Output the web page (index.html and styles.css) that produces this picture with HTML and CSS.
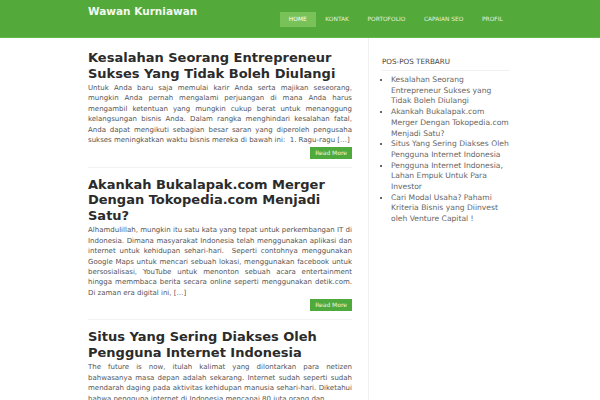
FILE: index.html
```html
<!DOCTYPE html>
<html>
<head>
<meta charset="utf-8">
<link rel="stylesheet" href="styles.css">
</head>
<body>
<header class="site-header">
  <div class="wrap header-inner">
    <div class="site-title">Wawan Kurniawan</div>
    <nav class="nav">
      <a class="nav-item active">HOME</a>
      <a class="nav-item">KONTAK</a>
      <a class="nav-item">PORTOFOLIO</a>
      <a class="nav-item">CAPAIAN SEO</a>
      <a class="nav-item">PROFIL</a>
    </nav>
  </div>
</header>
<div class="wrap main">
  <main class="content">
    <article class="post first">
      <h2 class="post-title">Kesalahan Seorang Entrepreneur Sukses Yang Tidak Boleh Diulangi</h2>
      <p class="excerpt">Untuk Anda baru saja memulai karir Anda serta majikan seseorang, mungkin Anda pernah mengalami perjuangan di mana Anda harus mengambil ketentuan yang mungkin cukup berat untuk menanggung kelangsungan bisnis Anda. Dalam rangka menghindari kesalahan fatal, Anda dapat mengikuti sebagian besar saran yang diperoleh pengusaha sukses meningkatkan waktu bisnis mereka di bawah ini:&nbsp; 1. Ragu-ragu […]</p>
      <div class="more-row"><a class="more">Read More</a></div>
    </article>
    <article class="post">
      <h2 class="post-title">Akankah Bukalapak.com Merger Dengan Tokopedia.com Menjadi Satu?</h2>
      <p class="excerpt">Alhamdulillah, mungkin itu satu kata yang tepat untuk perkembangan IT di Indonesia. Dimana masyarakat Indonesia telah menggunakan aplikasi dan internet untuk kehidupan sehari-hari. &nbsp;Seperti contohnya menggunakan Google Maps untuk mencari sebuah lokasi, menggunakan facebook untuk bersosialisasi, YouTube untuk menonton sebuah acara entertainment hingga memmbaca berita secara online seperti menggunakan detik.com. Di zaman era digital ini, […]</p>
      <div class="more-row"><a class="more">Read More</a></div>
    </article>
    <article class="post">
      <h2 class="post-title">Situs Yang Sering Diakses Oleh Pengguna Internet Indonesia</h2>
      <p class="excerpt">The future is now, itulah kalimat yang dilontarkan para netizen bahwasanya masa depan adalah sekarang. Internet sudah seperti sudah mendarah daging pada aktivitas kehidupan manusia sehari-hari. Diketahui bahwa pengguna internet di Indonesia mencapai 80 juta orang dan</p>
    </article>
  </main>
  <aside class="sidebar">
    <div class="widget">
      <h3 class="widget-title">POS-POS TERBARU</h3>
      <ul class="recent">
        <li>Kesalahan Seorang Entrepreneur Sukses yang Tidak Boleh Diulangi</li>
        <li>Akankah Bukalapak.com Merger Dengan Tokopedia.com Menjadi Satu?</li>
        <li>Situs Yang Sering Diakses Oleh Pengguna Internet Indonesia</li>
        <li>Pengguna Internet Indonesia, Lahan Empuk Untuk Para Investor</li>
        <li>Cari Modal Usaha? Pahami Kriteria Bisnis yang Diinvest oleh Venture Capital !</li>
      </ul>
    </div>
  </aside>
</div>
</body>
</html>
```

FILE: styles.css
```css
html, body {
  margin: 0;
  padding: 0;
  background: #fff;
  font-family: "DejaVu Sans", Verdana, sans-serif;
  overflow: hidden;
  height: 400px;
}
.wrap {
  width: 424px;
  margin: 0 auto;
}
.site-header {
  background: #53a93a;
  height: 37px;
  border-bottom: 1px solid #62b84a;
}
.header-inner {
  display: flex;
  justify-content: space-between;
  align-items: flex-start;
}
.site-title {
  color: #f2f9ef;
  font-weight: bold;
  font-size: 10.5px;
  margin-top: 5px;
  line-height: 13px;
}
.nav {
  display: flex;
  margin-top: 12px;
}
.nav-item {
  color: #e4f2de;
  font-size: 5.9px;
  line-height: 15px;
  height: 15px;
  padding: 0 9.3px;
}
.nav-item.active {
  background: #79c25a;
  color: #fff;
}
.main {
  display: flex;
  align-items: stretch;
  height: 362px;
}
.content {
  width: 264px;
  flex: none;
  padding-top: 3px;
}
.post {
  padding: 9px 0 8px;
  border-bottom: 1px solid #f2f2f2;
}
.post-title {
  margin: 0 0 2px;
  font-size: 13px;
  line-height: 15.5px;
  font-weight: bold;
  color: #2b2b2b;
}
.excerpt {
  margin: 0;
  font-size: 7px;
  line-height: 10.45px;
  color: #555;
  text-align: justify;
}
.more-row {
  display: flex;
  justify-content: flex-end;
  margin-top: 1px;
}
.more {
  background: #4eaa3c;
  color: #eaf6e4;
  font-size: 6px;
  line-height: 12px;
  padding: 0 5px;
}
.sidebar {
  margin-left: 16px;
  border-left: 1px solid #f1f1f1;
  flex: 1;
  padding: 19px 2px 0 13px;
}
.widget-title {
  margin: 0;
  font-size: 7.2px;
  font-weight: normal;
  color: #444;
  padding-bottom: 3px;
  border-bottom: 1px solid #f1f1f1;
  line-height: 10px;
}
.recent {
  margin: 4px 0 0;
  padding: 0 0 0 9px;
  font-size: 7.6px;
  line-height: 10.7px;
  color: #666;
}
.recent li {
  list-style: square;
}
```
